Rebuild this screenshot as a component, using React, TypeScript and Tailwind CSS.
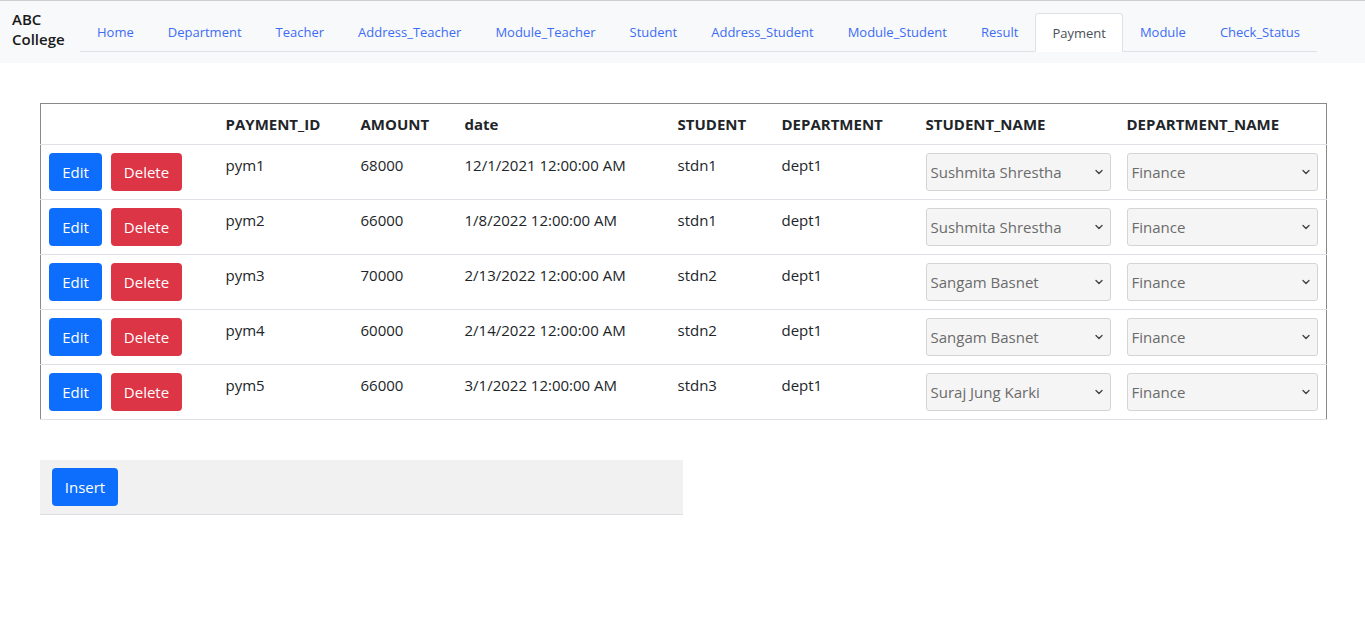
import { ChevronDown } from "lucide-react";

const tabs = [
  "Home",
  "Department",
  "Teacher",
  "Address_Teacher",
  "Module_Teacher",
  "Student",
  "Address_Student",
  "Module_Student",
  "Result",
  "Payment",
  "Module",
  "Check_Status",
];

const payments = [
  { id: "pym1", amount: "68000", date: "12/1/2021 12:00:00 AM", student: "stdn1", dept: "dept1", name: "Sushmita Shrestha" },
  { id: "pym2", amount: "66000", date: "1/8/2022 12:00:00 AM", student: "stdn1", dept: "dept1", name: "Sushmita Shrestha" },
  { id: "pym3", amount: "70000", date: "2/13/2022 12:00:00 AM", student: "stdn2", dept: "dept1", name: "Sangam Basnet" },
  { id: "pym4", amount: "60000", date: "2/14/2022 12:00:00 AM", student: "stdn2", dept: "dept1", name: "Sangam Basnet" },
  { id: "pym5", amount: "66000", date: "3/1/2022 12:00:00 AM", student: "stdn3", dept: "dept1", name: "Suraj Jung Karki" },
];

function FakeSelect({ value }: { value: string }) {
  return (
    <div className="flex h-[38px] w-full items-center justify-between rounded-[3px] border border-[#d4d4d4] bg-[#f5f5f5] pl-[4px] pr-[5px] text-[15px] text-[#6b6b6b]">
      <span>{value}</span>
      <ChevronDown size={12} strokeWidth={2.75} className="text-[#444]" />
    </div>
  );
}

export default function App() {
  return (
    <div
      className="min-h-[625px] bg-white text-[#212529]"
      style={{ fontFamily: "'Open Sans', 'Noto Sans', sans-serif" }}
    >
      <nav className="flex h-[63px] items-start border-t border-[#cfcfcf] bg-[#f8f9fa]">
        <div className="ml-3 mt-[8px] w-[60px] text-[15px] font-semibold leading-[20px] text-[#1a1a1a]">
          ABC
          <br />
          College
        </div>
        <ul className="ml-2 mt-3 flex border-b border-[#dee2e6]">
          {tabs.map((t) =>
            t === "Payment" ? (
              <li
                key={t}
                className="-mb-px flex h-[39px] items-center rounded-t-[4px] border border-b-white border-[#dee2e6] bg-white px-4 pt-[2px] text-[13px] text-[#495057]"
              >
                {t}
              </li>
            ) : (
              <li
                key={t}
                className="flex h-[38px] items-center px-[17px] pt-[2px] text-[13px] text-[#3d6cf5]"
              >
                {t}
              </li>
            )
          )}
        </ul>
      </nav>

      <div className="px-10 pt-10">
        <table className="w-[1286px] table-fixed border-collapse border-x border-t border-[#8a8a8a] text-[15px]">
          <colgroup>
            <col className="w-[177px]" />
            <col className="w-[135px]" />
            <col className="w-[104px]" />
            <col className="w-[213px]" />
            <col className="w-[104px]" />
            <col className="w-[144px]" />
            <col className="w-[201px]" />
            <col className="w-[208px]" />
          </colgroup>
          <thead>
            <tr className="h-[41px] border-b border-[#dee2e6] text-left font-bold">
              <th />
              <th className="px-2">PAYMENT_ID</th>
              <th className="px-2">AMOUNT</th>
              <th className="px-2">date</th>
              <th className="px-2">STUDENT</th>
              <th className="px-2">DEPARTMENT</th>
              <th className="px-2">STUDENT_NAME</th>
              <th className="px-2">DEPARTMENT_NAME</th>
            </tr>
          </thead>
          <tbody>
            {payments.map((p) => (
              <tr key={p.id} className="h-[55px] border-b border-[#dee2e6] align-top">
                <td className="p-2">
                  <div className="flex gap-[9px]">
                    <button className="h-[38px] w-[53px] rounded-[4px] bg-[#0d6efd] text-white">
                      Edit
                    </button>
                    <button className="h-[38px] w-[71px] rounded-[4px] bg-[#dc3545] text-white">
                      Delete
                    </button>
                  </div>
                </td>
                <td className="px-2 py-2 leading-6">{p.id}</td>
                <td className="px-2 py-2 leading-6">{p.amount}</td>
                <td className="px-2 py-2 leading-6">{p.date}</td>
                <td className="px-2 py-2 leading-6">{p.student}</td>
                <td className="px-2 py-2 leading-6">{p.dept}</td>
                <td className="p-2">
                  <FakeSelect value={p.name} />
                </td>
                <td className="p-2">
                  <FakeSelect value="Finance" />
                </td>
              </tr>
            ))}
          </tbody>
        </table>

        <div className="mt-10 flex h-[55px] w-[643px] items-center border-b border-[#dddde3] bg-[#f1f1f1] px-3">
          <button className="h-[38px] w-[66px] rounded-[4px] bg-[#0d6efd] text-[15px] text-white">
            Insert
          </button>
        </div>
      </div>
    </div>
  );
}
